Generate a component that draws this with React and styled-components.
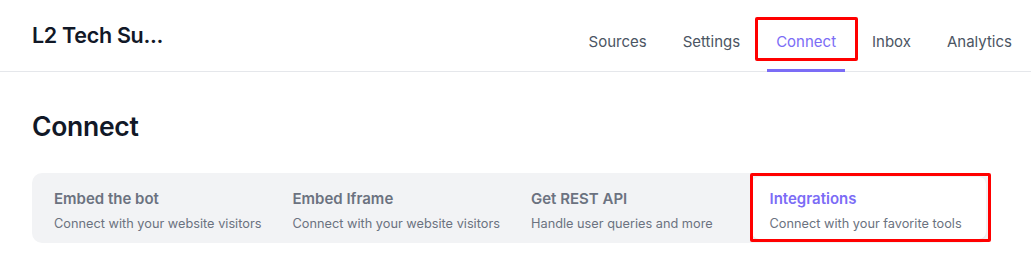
import React from 'react'
import styled, {createGlobalStyle} from "styled-components"

const GlobalStyle = createGlobalStyle`
  * { box-sizing: border-box; }
  body {
    margin: 0;
    background: #ffffff;
    font-family: Inter, "Noto Sans", sans-serif;
    color: #111827;
  }
`

const Header = styled.header`
  height: 72px;
  display: flex;
  align-items: stretch;
  justify-content: space-between;
  padding: 0 10px 0 32px;
  border-bottom: 1px solid #e5e7eb;
`

const Brand = styled.div`
  display: flex;
  align-items: center;
  padding-bottom: 1px;
  font-size: 21.5px;
  font-weight: 600;
  letter-spacing: -0.3px;
  color: #111827;
`

const Nav = styled.nav`
  display: flex;
  gap: 18px;
`

const NavItem = styled.a`
  position: relative;
  display: flex;
  align-items: center;
  padding: 16px 9px 2px;
  font-size: 15px;
  color: ${p => (p.$active ? '#7b6cf6' : '#4b5563')};
  text-decoration: none;
  cursor: pointer;
  border-bottom: 3px solid ${p => (p.$active ? '#7b6cf6' : 'transparent')};
  margin-bottom: -1px;

  ${p => p.$marked && `
    &::after {
      content: '';
      position: absolute;
      left: -12px;
      right: -13px;
      top: 17px;
      bottom: 8px;
      border: 3px solid #ff0000;
      border-radius: 2px;
    }
  `}
`

const Main = styled.main`
  padding: 38px 41px 0 32px;
`

const Title = styled.h1`
  margin: 0 0 31px;
  font-size: 26.5px;
  font-weight: 600;
  letter-spacing: -0.3px;
  color: #111827;
`

const Tabs = styled.div`
  display: grid;
  grid-template-columns: repeat(4, minmax(0, 1fr));
  gap: 4px;
  padding: 4px;
  background: #f2f3f5;
  border-radius: 10px;
`

const Tab = styled.div`
  position: relative;
  display: flex;
  flex-direction: column;
  gap: 8px;
  padding: 12px 18px 8px;
  border-radius: 7px;
  background: ${p => (p.$active ? '#ffffff' : 'transparent')};
  box-shadow: ${p => (p.$active ? '0 1px 2px rgba(0,0,0,0.06)' : 'none')};
  cursor: pointer;

  ${p => p.$marked && `
    &::after {
      content: '';
      position: absolute;
      inset: -4px -5px -3px -2px;
      border: 3px solid #ff0000;
      border-radius: 2px;
    }
  `}
`

const TabTitle = styled.div`
  font-size: 15px;
  font-weight: 600;
  color: ${p => (p.$active ? '#7b6cf6' : '#6b7280')};
`

const TabText = styled.div`
  font-size: 12.75px;
  color: #6b7280;
  white-space: nowrap;
`

const navItems = ['Sources', 'Settings', 'Connect', 'Inbox', 'Analytics']

const tabs = [
  {title: 'Embed the bot', text: 'Connect with your website visitors'},
  {title: 'Embed Iframe', text: 'Connect with your website visitors'},
  {title: 'Get REST API', text: 'Handle user queries and more'},
  {title: 'Integrations', text: 'Connect with your favorite tools', active: true},
]

const App = () => {
  return (
    <>
      <GlobalStyle/>
      <Header>
        <Brand>L2 Tech Su...</Brand>
        <Nav>
          {navItems.map(item => (
            <NavItem key={item} $active={item === 'Connect'} $marked={item === 'Connect'}>
              {item}
            </NavItem>
          ))}
        </Nav>
      </Header>
      <Main>
        <Title>Connect</Title>
        <Tabs>
          {tabs.map(t => (
            <Tab key={t.title} $active={t.active} $marked={t.active}>
              <TabTitle $active={t.active}>{t.title}</TabTitle>
              <TabText>{t.text}</TabText>
            </Tab>
          ))}
        </Tabs>
      </Main>
    </>
  )
}

export default App
